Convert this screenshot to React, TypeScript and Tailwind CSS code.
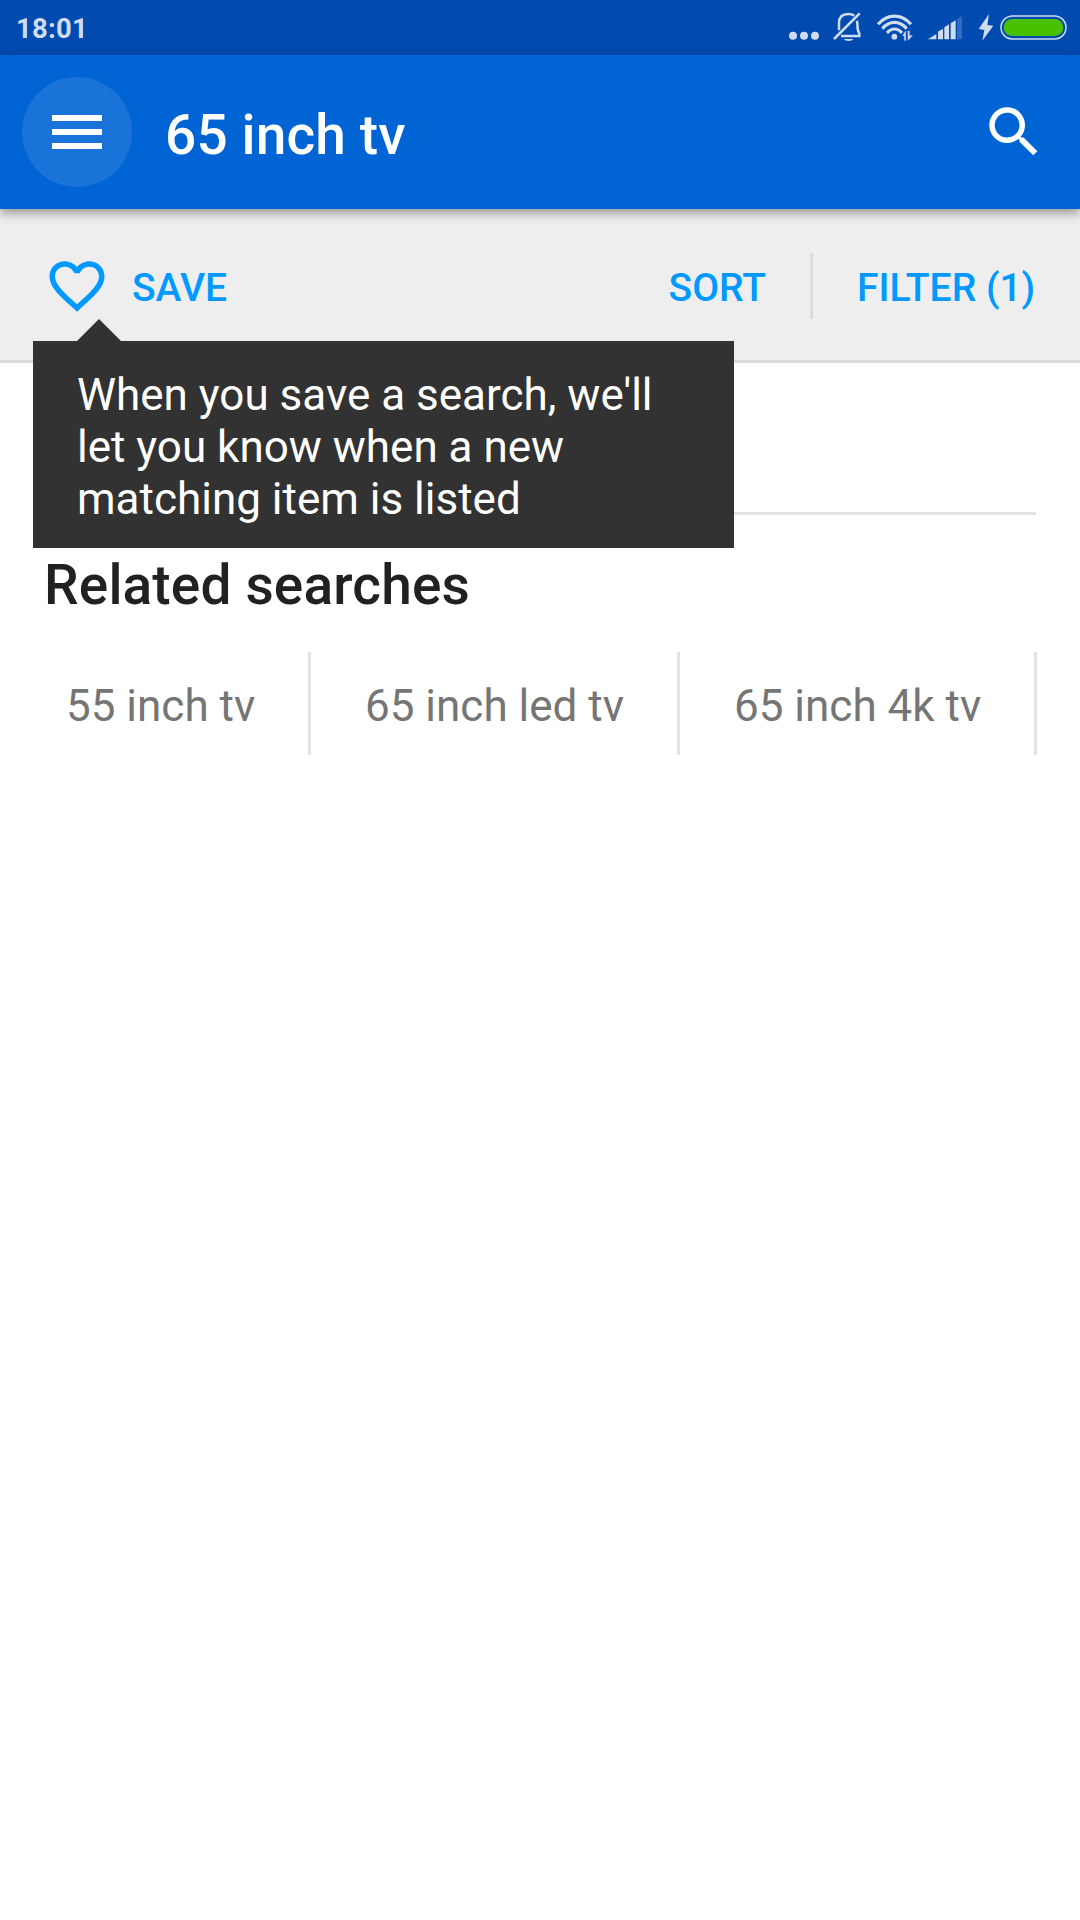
const related = [
  { label: "55 inch tv", cell: "w-[267px] pl-[22px]" },
  { label: "65 inch led tv", cell: "w-[369px] pl-[54px]" },
  { label: "65 inch 4k tv", cell: "w-[357px] pl-[54px]" },
];

function StatusIcons() {
  return (
    <svg width="310" height="55" viewBox="0 0 930 165" fill="none" aria-hidden="true">
      <g fill="#cfdcf1">
        <circle cx="69" cy="107" r="12" />
        <circle cx="102" cy="107" r="12" />
        <circle cx="135" cy="107" r="12" />
      </g>
      <g stroke="#cfdcf1" strokeWidth="7.5">
        <path d="M207 91V69C207 50 219 42 235 42C242 42 248 44 253 47" />
        <path d="M261 62C264 79 260 90 268 100V108H213" />
        <path d="M192 117L269 40" />
      </g>
      <path d="M222 117H250C247 125 225 125 222 117Z" fill="#cfdcf1" />
      <g stroke="#cfdcf1" strokeWidth="9.5">
        <path d="M324 73C352 40 395 40 423 73" />
        <path d="M337 86C358 61 389 61 410 86" />
        <path d="M351 99C364 83 383 83 396 99" />
      </g>
      <circle cx="373" cy="110" r="8.5" fill="#cfdcf1" />
      <path d="M398 107L407 93V121H403V107Z M414 93H418V107H427L414 121Z" fill="#cfdcf1" stroke="#cfdcf1" strokeWidth="1.5" />
      <g fill="#cfdcf1">
        <path d="M474 118L499 102V118Z" />
        <path d="M504 118V95L519 86V118Z" />
        <path d="M523 118V82L537 73V118Z" />
        <path d="M542 118V70L557 61V118Z" />
      </g>
      <path d="M561 118V58L576 48V118Z" fill="#2f6cc0" />
      <path d="M657 42L626 87L643 90L637 122L670 77L652 75Z" fill="#cfdcf1" />
      <rect x="693" y="48" width="195" height="69" rx="34.5" stroke="#cfdcf1" strokeWidth="4.5" />
      <rect x="701" y="57" width="179" height="51" rx="25.5" fill="#49c100" />
    </svg>
  );
}

function StatusBar() {
  return (
    <div className="flex h-[55px] justify-between bg-[#004ab0]">
      <span className="pt-[11px] pl-4 text-[27.5px] leading-[36px] font-bold tracking-[0.25px] text-[#cfdcf1]">18:01</span>
      <StatusIcons />
    </div>
  );
}

function Toolbar() {
  return (
    <header className="relative z-10 flex h-[154px] items-center bg-[#0064d4] pr-[33px] pl-[22px] shadow-[0_4px_10px_rgba(0,0,0,0.38)]">
      <button aria-label="Menu" className="flex size-[110px] flex-col items-center justify-center gap-2 rounded-full bg-[#1973d8]">
        <span className="h-[6px] w-[50px] bg-white" />
        <span className="h-[6px] w-[50px] bg-white" />
        <span className="h-[6px] w-[50px] bg-white" />
      </button>
      <h1 className="ml-[33px] flex-1 pt-[6px] text-[55px] leading-[64px] font-medium tracking-[0.13px] text-white">65 inch tv</h1>
      <svg className="-mt-px size-[66px]" viewBox="0 0 24 24" fill="#fff" aria-hidden="true">
        <path d="M15.5 14h-.79l-.28-.27A6.471 6.471 0 0 0 16 9.5 6.5 6.5 0 1 0 9.5 16c1.61 0 3.09-.59 4.23-1.57l.27.28v.79l5 4.99L20.49 19l-4.99-5zm-6 0C7.01 14 5 11.99 5 9.5S7.01 5 9.5 5 14 7.01 14 9.5 11.99 14 9.5 14z" />
      </svg>
    </header>
  );
}

function SaveTooltip() {
  return (
    <div className="absolute top-[110px] left-[33px] z-20">
      <svg className="ml-11 block" width="44" height="22" viewBox="0 0 44 22" fill="#323232" aria-hidden="true">
        <path d="M22 0L44 22H0Z" />
      </svg>
      <p className="h-[207px] w-[701px] bg-[#323232] pt-7 pl-11 text-[44px] leading-[52px] font-normal text-white">
        When you save a search, we'll
        <br />
        let you know when a new
        <br />
        matching item is listed
      </p>
    </div>
  );
}

function ActionBar() {
  return (
    <div className="relative flex h-[154px] items-start border-b-[3px] border-[#dcdcdc] bg-[#eeeeee] pl-11 text-[39px] leading-[46px] font-medium text-[#0099ff]">
      <svg className="mt-11 size-[66px]" viewBox="0 0 24 24" fill="currentColor" aria-hidden="true">
        <path d="M16.5 3c-1.74 0-3.41.81-4.5 2.09C10.91 3.81 9.24 3 7.5 3 4.42 3 2 5.42 2 8.5c0 3.78 3.4 6.86 8.55 11.54L12 21.35l1.45-1.32C18.6 15.36 22 12.28 22 8.5 22 5.42 19.58 3 16.5 3zm-4.4 15.55l-.1.1-.1-.1C7.14 14.24 4 11.39 4 8.5 4 6.5 5.5 5 7.5 5c1.54 0 3.04.99 3.57 2.36h1.87C13.46 5.99 14.96 5 16.5 5c2 0 3.5 1.5 3.5 3.5 0 2.89-3.14 5.74-7.9 10.05z" />
      </svg>
      <span className="mt-14 ml-[22px]">SAVE</span>
      <span className="mt-14 ml-auto">SORT</span>
      <span className="mt-11 ml-11 h-[66px] w-[3px] bg-[#dcdcdc]" />
      <span className="mt-14 mr-11 ml-11 w-[179px] whitespace-nowrap">FILTER (1)</span>
      <SaveTooltip />
    </div>
  );
}

export default function App() {
  return (
    <div className="h-[1920px] w-[1080px] overflow-hidden bg-white font-['Roboto',sans-serif]">
      <StatusBar />
      <Toolbar />
      <ActionBar />
      <main className="px-11">
        <div className="mt-[149px] h-[3px] bg-[#e2e2e2]" />
        <h2 className="pt-[38px] text-[55px] leading-[64px] font-medium tracking-[0.15px] text-[#212121]">Related searches</h2>
        <div className="mt-[35px] flex">
          {related.map((item) => (
            <div key={item.label} className={`h-[103px] shrink-0 border-r-[3px] border-[#e2e2e2] pt-7 text-[44px] leading-[52px] text-[#757575] ${item.cell}`}>
              {item.label}
            </div>
          ))}
        </div>
      </main>
    </div>
  );
}
